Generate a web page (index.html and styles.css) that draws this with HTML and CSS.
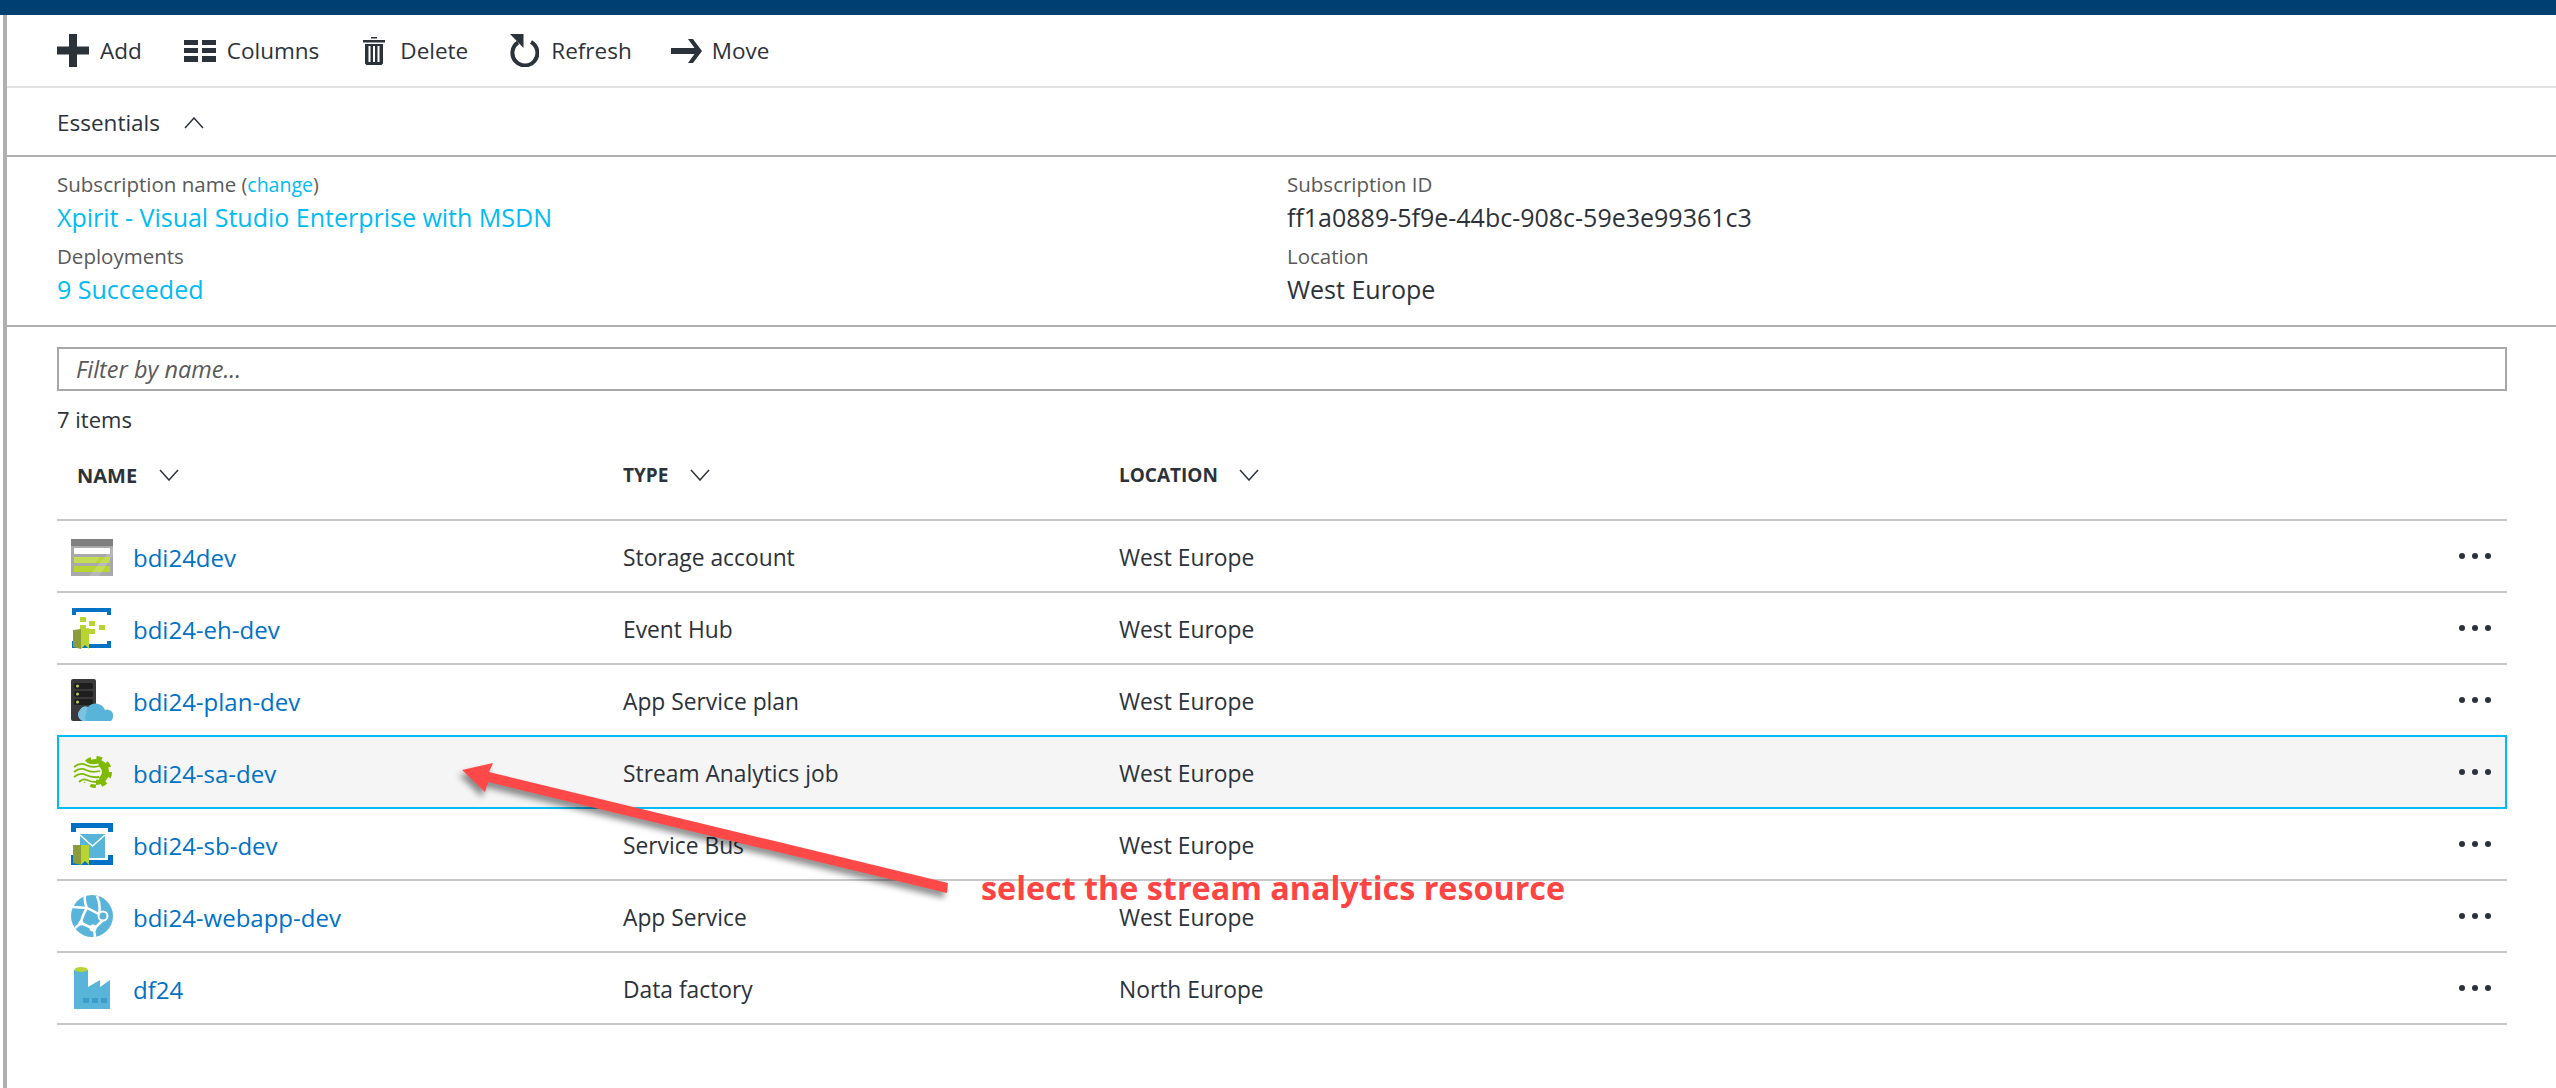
FILE: index.html
```html
<!DOCTYPE html>
<html>
<head>
    <meta charset="UTF-8">
    <title>Resource group</title>
    <link rel="stylesheet" href="styles.css">
</head>
<body>
    <div class="top-bar"></div>
    <div class="blade">
        <ul class="toolbar">
            <li class="tool-add">
                <svg width="32" height="33" viewBox="0 0 32 33"><path d="M12 0h8v12.500h12v8H20V33h-8V20.500H0v-8h12z" fill="#2c323a"/></svg>
                <span>Add</span>
            </li>
            <li class="tool-columns">
                <svg width="32" height="22" viewBox="0 0 32 22" fill="#2c323a"><path d="M0 0h14v5H0zM18 0h14v5H18zM0 8h14v5H0zM18 8h14v5H18zM0 16h14v6H0zM18 16h14v6H18z"/></svg>
                <span>Columns</span>
            </li>
            <li class="tool-delete">
                <svg width="22" height="28" viewBox="0 0 22 28" fill="#2c323a"><path d="M8 0h6v1.500H8zM0 3h22v2.500H0zM2 7h18v19.500l-1.500 1.500h-15L2 26.500zM5.500 9v16h2V9zM10 9v16h2V9zM14.500 9v16h2V9z" fill-rule="evenodd"/></svg>
                <span>Delete</span>
            </li>
            <li class="tool-refresh">
                <svg width="30" height="33" viewBox="0 0 30 33"><path d="M9 8.500A12.500 12.500 0 1 0 22 8" fill="none" stroke="#2c323a" stroke-width="4"/><path d="M1 0h13.500v14z" fill="#2c323a"/></svg>
                <span>Refresh</span>
            </li>
            <li class="tool-move">
                <svg width="31" height="24" viewBox="0 0 31 24"><path d="M17 0h5l9 12-9 12h-5l6.500-9H0V9h23.500z" fill="#2c323a"/></svg>
                <span>Move</span>
            </li>
        </ul>

        <div class="essentials-head">
            <span>Essentials</span>
            <svg class="chevron" width="20" height="12" viewBox="0 0 20 12"><path d="M1 11l9-10 9 10" fill="none" stroke="#2c323a" stroke-width="1.500"/></svg>
        </div>

        <div class="essentials">
            <dl class="col-left">
                <dt>Subscription name <span class="paren">(<a>change</a>)</span></dt>
                <dd class="link">Xpirit - Visual Studio Enterprise with MSDN</dd>
                <dt>Deployments</dt>
                <dd class="link">9 Succeeded</dd>
            </dl>
            <dl class="col-right">
                <dt>Subscription ID</dt>
                <dd>ff1a0889-5f9e-44bc-908c-59e3e99361c3</dd>
                <dt>Location</dt>
                <dd>West Europe</dd>
            </dl>
        </div>

        <div class="content">
            <div class="filter">Filter by name...</div>
            <p class="count">7 items</p>

            <div class="head-row">
                <div class="head-name">NAME
                    <svg width="20" height="12" viewBox="0 0 20 12"><path d="M1 1l9 10 9-10" fill="none" stroke="#2c323a" stroke-width="1.500"/></svg>
                </div>
                <div>TYPE
                    <svg width="20" height="12" viewBox="0 0 20 12"><path d="M1 1l9 10 9-10" fill="none" stroke="#2c323a" stroke-width="1.500"/></svg>
                </div>
                <div class="head-location">LOCATION
                    <svg width="20" height="12" viewBox="0 0 20 12"><path d="M1 1l9 10 9-10" fill="none" stroke="#2c323a" stroke-width="1.500"/></svg>
                </div>
            </div>

            <ul class="list">
                <li class="row">
                    <div class="name">
                        <svg width="42" height="42" viewBox="0 0 42 42">
                            <path d="M0 4h42v37H0z" fill="#a9a9ab"/>
                            <path d="M0 4h42v7H0z" fill="#7f7f7f"/>
                            <path d="M3 13h36v6H3z" fill="#fff"/>
                            <path d="M3 22h36v6H3zM3 31h36v6H3z" fill="#b8d432"/>
                            <path d="M18 41L42 12v8L28 41zM3 22h26L24 28H3z" fill="#fff" opacity=".18"/>
                        </svg>
                        <a>bdi24dev</a>
                    </div>
                    <div class="cell">Storage account</div>
                    <div class="cell">West Europe</div>
                    <div class="more"><i></i><i></i><i></i></div>
                </li>
                <li class="row">
                    <div class="name">
                        <svg width="42" height="42" viewBox="0 0 42 42">
                            <path d="M1 8V1h39v7h-4V5H5v3zM1 34v7h39v-7h-4v3H5v-3z" fill="#0072c6"/>
                            <path d="M9 10h6v5H9zM18 14h6v5h-6zM28 18h6v5h-6zM9 18h6v5H9zM18 22h6v5h-6z" fill="#b8d432"/>
                            <path d="M2 23l8-1v20l-8-2z" fill="#8c9c3a"/>
                            <path d="M10 22l8-1v21l-4-4-4 4z" fill="#b8d432"/>
                        </svg>
                        <a>bdi24-eh-dev</a>
                    </div>
                    <div class="cell">Event Hub</div>
                    <div class="cell">West Europe</div>
                    <div class="more"><i></i><i></i><i></i></div>
                </li>
                <li class="row">
                    <div class="name">
                        <svg width="42" height="42" viewBox="0 0 42 42">
                            <rect width="25" height="42" rx="2" fill="#3a3a3a"/>
                            <rect x="3" y="4" width="19" height="6" rx="2" fill="#1e1e1e"/>
                            <rect x="3" y="12" width="19" height="6" rx="2" fill="#1e1e1e"/>
                            <rect x="3" y="20" width="19" height="6" rx="2" fill="#1e1e1e"/>
                            <circle cx="6.500" cy="7" r="1.500" fill="#b8d432"/>
                            <circle cx="6.500" cy="15" r="1.500" fill="#b8d432"/>
                            <circle cx="6.500" cy="23" r="1.500" fill="#b8d432"/>
                            <path d="M14 42a6.500 6.500 0 0 1-5-11 7 7 0 0 1 8-3 10 10 0 0 1 17 3 6 6 0 0 1 8 7 5 5 0 0 1-2 4z" fill="#59b4d9"/>
                            <path d="M14 42a6.500 6.500 0 0 1-5-11 7 7 0 0 1 8-3q-2 2-1 5-3 3-1 9z" fill="#7cc3e2"/>
                        </svg>
                        <a>bdi24-plan-dev</a>
                    </div>
                    <div class="cell">App Service plan</div>
                    <div class="cell">West Europe</div>
                    <div class="more"><i></i><i></i><i></i></div>
                </li>
                <li class="row selected">
                    <div class="name">
                        <svg width="42" height="42" viewBox="0 0 42 42">
                            <circle cx="25" cy="21" r="9.500" fill="none" stroke="#7fba00" stroke-width="7"/>
                            <circle cx="25" cy="21" r="14" fill="none" stroke="#7fba00" stroke-width="4" stroke-dasharray="5.500 5.500"/>
                            <path d="M3 16q6-5 12-2t13 1M3 21q6-5 12-2t14 1M3 26q6-5 12-2t13 2M8 31q4-4 8-2t9 2" fill="none" stroke="#f5f5f5" stroke-width="5"/>
                            <path d="M3 16q6-5 12-2t13 1M3 21q6-5 12-2t14 1M3 26q6-5 12-2t13 2M8 31q4-4 8-2t9 2" fill="none" stroke="#7fba00" stroke-width="1.800"/>
                        </svg>
                        <a>bdi24-sa-dev</a>
                    </div>
                    <div class="cell">Stream Analytics job</div>
                    <div class="cell">West Europe</div>
                    <div class="more"><i></i><i></i><i></i></div>
                </li>
                <li class="row">
                    <div class="name">
                        <svg width="42" height="42" viewBox="0 0 42 42">
                            <path d="M0 9V0h42v9h-5V5H5v4zM0 32v10h42V32h-5v5H5v-5z" fill="#0072c6"/>
                            <path d="M9 11h25v24H9z" fill="#59b4d9"/>
                            <path d="M9 12l12.500 11L34 12" fill="none" stroke="#fff" stroke-width="1.500"/>
                            <path d="M2 22h8v20l-8-2z" fill="#8c9c3a"/>
                            <path d="M10 22h8v20l-4-4-4 4z" fill="#b8d432"/>
                        </svg>
                        <a>bdi24-sb-dev</a>
                    </div>
                    <div class="cell">Service Bus</div>
                    <div class="cell">West Europe</div>
                    <div class="more"><i></i><i></i><i></i></div>
                </li>
                <li class="row">
                    <div class="name">
                        <svg width="42" height="42" viewBox="0 0 42 42">
                            <circle cx="21" cy="21" r="21" fill="#59b4d9"/>
                            <path d="M14 0q-1 8 2 13M2 12l14 1 12 6 8 2M16 13q-5 8-6 15M10 28l13 6 13-13M23 34l1 8M28 19q2-9-2-18M10 28l-6 5" fill="none" stroke="#fff" stroke-width="2.500"/>
                            <circle cx="32" cy="21" r="4.500" fill="#59b4d9" stroke="#fff" stroke-width="2"/>
                            <circle cx="22" cy="33" r="3.500" fill="#fff"/>
                            <circle cx="10" cy="28" r="2.500" fill="#fff"/>
                        </svg>
                        <a>bdi24-webapp-dev</a>
                    </div>
                    <div class="cell">App Service</div>
                    <div class="cell">West Europe</div>
                    <div class="more"><i></i><i></i><i></i></div>
                </li>
                <li class="row">
                    <div class="name">
                        <svg width="42" height="42" viewBox="0 0 42 42">
                            <path d="M3 3h14v17l12-7v7l10-7v29H3z" fill="#59b4d9"/>
                            <ellipse cx="10" cy="2.500" rx="6.500" ry="2.500" fill="#b8d432"/>
                            <path d="M12 31h6v5h-6zM21 31h6v5h-6zM30 31h6v5h-6z" fill="#3e9ccb"/>
                        </svg>
                        <a>df24</a>
                    </div>
                    <div class="cell">Data factory</div>
                    <div class="cell">North Europe</div>
                    <div class="more"><i></i><i></i><i></i></div>
                </li>
            </ul>
        </div>
    </div>

    <!-- annotation drawn over the screenshot -->
    <svg class="arrow" width="500" height="140" viewBox="0 0 500 140">
        <path d="M2 10L33 3 29 12 488 123 487 133 28 22 25 32z" fill="#ff4848"/>
    </svg>
    <p class="callout">select the stream analytics resource</p>
</body>
</html>
```

FILE: styles.css
```css
body,dl,dd,dt,p{margin:0;}
ul,li{margin:0;padding:0;list-style:none;}
body{
    font-family:"Open Sans","Liberation Sans",sans-serif;
    font-size:22.5px;
    color:#2c323a;
    background:#fff;
    min-height:1088px;
    position:relative;
    overflow:hidden;
}
svg{display:block;}

.top-bar{
    height:15px;
    background:#003f72;
}
.blade{
    height:1073px;
    margin-left:3px;
    border-left:4px solid #b0b0b0;
}

/* toolbar */
.toolbar{
    display:flex;
    align-items:center;
    height:71px;
    padding-left:50px;
    border-bottom:2px solid #e2e2e2;
}
.toolbar li{
    display:flex;
    align-items:center;
    gap:11px;
    margin-right:42px;
}
.toolbar .tool-columns{margin-right:44px;}
.toolbar .tool-delete{gap:15px;margin-right:41px;}
.toolbar .tool-refresh{gap:12px;margin-right:39px;}
.toolbar .tool-move{gap:10px;}

.essentials-head{
    display:flex;
    align-items:center;
    gap:24px;
    height:69px;
    padding:2px 0 0 50px;
    box-sizing:border-box;
    border-bottom:2px solid #b0b0b0;
}

/* essentials */
.essentials{
    display:flex;
    height:170px;
    padding:11px 0 0 50px;
    box-sizing:border-box;
    border-bottom:2px solid #b0b0b0;
}
.col-left{width:1230px;}
.essentials dt{
    height:33px;
    line-height:33px;
    font-size:20.5px;
    color:#595959;
}
.essentials dd{
    height:39px;
    line-height:33px;
    font-size:25px;
}
.link{color:#00bcf2;}
.paren{font-size:19.5px;}
.paren a{color:#00bcf2;}

/* list */
.content{
    padding:20px 49px 0 50px;
}
.filter{
    height:44px;
    line-height:40px;
    padding-left:17px;
    box-sizing:border-box;
    border:2px solid #a8a8a8;
    font-style:italic;
    font-size:23.5px;
    color:#595959;
}
.count{
    height:56px;
    line-height:56px;
    font-size:22px;
}
.head-row,.row{
    display:grid;
    grid-template-columns:566px 496px 1fr auto;
    align-items:center;
}
.head-row{
    height:72px;
    padding-bottom:16px;
    box-sizing:border-box;
    font-size:19px;
    font-weight:700;
}
.head-row > div{
    display:flex;
    align-items:center;
    gap:22px;
}
.head-name{padding-left:20px;font-size:20px;}
.head-row .head-location{gap:21px;}

.list{border-top:2px solid #c8c8c8;}
.row{
    height:72px;
    box-sizing:border-box;
    border-bottom:2px solid #c8c8c8;
    font-size:22.8px;
    line-height:26px;
}
.row.selected{
    height:74px;
    margin-top:-2px;
    border:2px solid #00bcf2;
    background:#f5f5f5;
    grid-template-columns:564px 496px 1fr auto;
}
.cell{padding-top:3px;}
.name{
    display:flex;
    align-items:center;
    gap:20px;
    padding-left:14px;
}
.selected .name{padding-left:12px;}
.name a{
    padding-top:4px;
    color:#0072c6;
    font-size:24px;
}
.more{
    display:flex;
    gap:7px;
    padding-right:16px;
}
.selected .more{padding-right:14px;}
.more i{
    width:6px;
    height:6px;
    border-radius:50%;
    background:#2c323a;
}

/* annotation */
.arrow{
    position:absolute;
    left:460px;
    top:760px;
    filter:drop-shadow(-3px 5px 3px rgba(0,0,0,.45));
}
.callout{
    position:absolute;
    left:981px;
    top:872px;
    line-height:30px;
    font-size:32.3px;
    font-weight:700;
    color:#ff4444;
    white-space:nowrap;
}
```
